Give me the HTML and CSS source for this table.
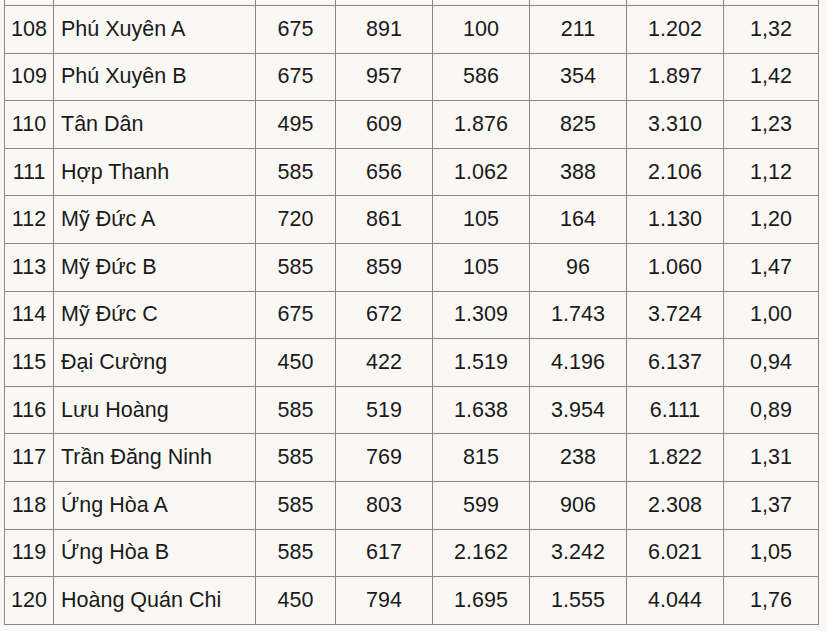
FILE: index.html
```html
<!DOCTYPE html>
<html lang="vi">
<head>
<meta charset="utf-8">
<title>Bảng</title>
<link rel="stylesheet" href="styles.css">
</head>
<body>
<div class="viewport">
<table class="data">
<colgroup>
<col class="c-stt"><col class="c-name"><col class="c-a"><col class="c-n"><col class="c-n"><col class="c-n"><col class="c-n"><col class="c-r">
</colgroup>
<tbody>
<tr class="cut"><td></td><td></td><td></td><td></td><td></td><td></td><td></td><td></td></tr>
<tr><td>108</td><td class="name">Phú Xuyên A</td><td>675</td><td>891</td><td>100</td><td>211</td><td>1.202</td><td>1,32</td></tr>
<tr><td>109</td><td class="name">Phú Xuyên B</td><td>675</td><td>957</td><td>586</td><td>354</td><td>1.897</td><td>1,42</td></tr>
<tr><td>110</td><td class="name">Tân Dân</td><td>495</td><td>609</td><td>1.876</td><td>825</td><td>3.310</td><td>1,23</td></tr>
<tr><td>111</td><td class="name">Hợp Thanh</td><td>585</td><td>656</td><td>1.062</td><td>388</td><td>2.106</td><td>1,12</td></tr>
<tr><td>112</td><td class="name">Mỹ Đức A</td><td>720</td><td>861</td><td>105</td><td>164</td><td>1.130</td><td>1,20</td></tr>
<tr><td>113</td><td class="name">Mỹ Đức B</td><td>585</td><td>859</td><td>105</td><td>96</td><td>1.060</td><td>1,47</td></tr>
<tr><td>114</td><td class="name">Mỹ Đức C</td><td>675</td><td>672</td><td>1.309</td><td>1.743</td><td>3.724</td><td>1,00</td></tr>
<tr><td>115</td><td class="name">Đại Cường</td><td>450</td><td>422</td><td>1.519</td><td>4.196</td><td>6.137</td><td>0,94</td></tr>
<tr><td>116</td><td class="name">Lưu Hoàng</td><td>585</td><td>519</td><td>1.638</td><td>3.954</td><td>6.111</td><td>0,89</td></tr>
<tr><td>117</td><td class="name">Trần Đăng Ninh</td><td>585</td><td>769</td><td>815</td><td>238</td><td>1.822</td><td>1,31</td></tr>
<tr><td>118</td><td class="name">Ứng Hòa A</td><td>585</td><td>803</td><td>599</td><td>906</td><td>2.308</td><td>1,37</td></tr>
<tr><td>119</td><td class="name">Ứng Hòa B</td><td>585</td><td>617</td><td>2.162</td><td>3.242</td><td>6.021</td><td>1,05</td></tr>
<tr><td>120</td><td class="name">Hoàng Quán Chi</td><td>450</td><td>794</td><td>1.695</td><td>1.555</td><td>4.044</td><td>1,76</td></tr>
</tbody>
</table>
</div>
</body>
</html>
```
FILE: styles.css
```css
html, body {
  margin: 0;
  padding: 0;
  background: #f9f8f4;
}
.viewport {
  height: 631px;
  overflow: hidden;
}
.data {
  border-collapse: collapse;
  table-layout: fixed;
  width: 815px;
  margin: -42.6px 0 0 4px;
  font-family: "Liberation Sans", Arial, sans-serif;
  font-size: 21.5px;
  color: #1a1a1a;
  background: #f9f8f4;
}
.c-stt { width: 49px; }
.c-name { width: 202px; }
.c-a { width: 80px; }
.c-n { width: 97px; }
.c-r { width: 95px; }
.data tr { height: 47.6px; }
.data td {
  border: 1px solid #8a8784;
  padding: 0 4px;
  text-align: center;
  vertical-align: middle;
  white-space: nowrap;
}
.data td.name {
  text-align: left;
  padding-left: 7px;
}
```
